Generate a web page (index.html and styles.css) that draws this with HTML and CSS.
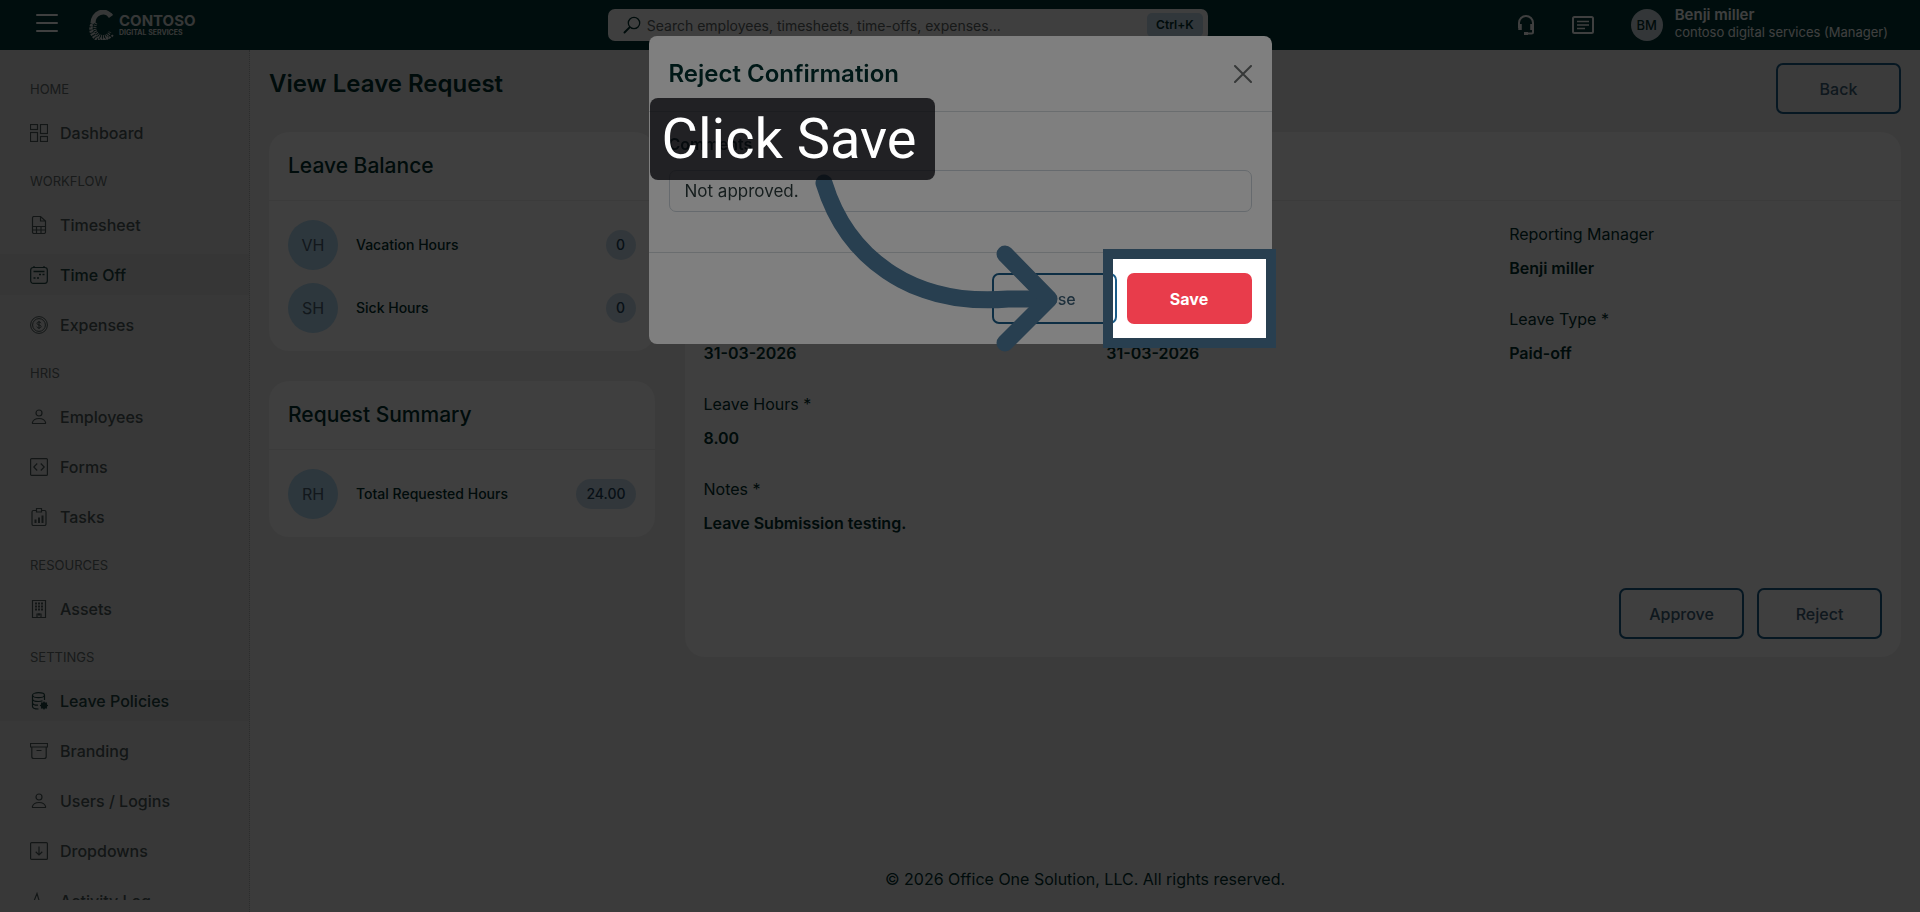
FILE: index.html
```html
<!DOCTYPE html>
<html lang="en">
<head>
    <meta charset="UTF-8">
    <meta name="viewport" content="width=device-width, initial-scale=1.0">
    <title>View Leave Request</title>
    <link rel="stylesheet" href="styles.css">
</head>
<body>
    <header class="topbar">
        <button class="icon-btn menu-btn" aria-label="Menu">
            <svg width="22" height="20" viewBox="0 0 22 20" fill="none" stroke="currentColor" stroke-width="2" stroke-linecap="round"><path d="M1 2h20M1 10h20M1 18h20"/></svg>
        </button>
        <a class="logo" href="#">
            <svg width="28" height="30" viewBox="0 0 28 30" fill="none" stroke="currentColor">
                <path d="M25 5A12.500 13.500 0 1 0 26 25" stroke-width="2" stroke-dasharray="2 1"/>
                <path d="M24 6.500A10 11 0 0 0 6 13" stroke-width="5"/>
                <path d="M6 12A10 11 0 0 0 22 26" stroke-width="3" stroke-dasharray="2 1"/>
                <path d="M9 13A8 9 0 0 0 23 22" stroke-width="3" stroke-dasharray="1 1"/>
            </svg>
            <span class="logo-text">
                <span class="logo-name">CONTOSO</span>
                <span class="logo-sub">DIGITAL SERVICES</span>
            </span>
        </a>
        <div class="search">
            <svg width="18" height="18" viewBox="0 0 18 18" fill="none" stroke="currentColor" stroke-linecap="round"><circle cx="11" cy="7" r="5.7" stroke-width="1.3"/><path d="M6.6 11.4L1.5 16.5" stroke-width="2"/></svg>
            <input type="text" aria-label="Search" placeholder="Search employees, timesheets, time-offs, expenses...">
            <kbd>Ctrl+K</kbd>
        </div>
        <div class="topbar-right">
            <button class="icon-btn" aria-label="Support">
                <svg width="18" height="20" viewBox="0 0 18 20" fill="none" stroke="currentColor" stroke-width="2"><path d="M2 13V8a7 7 0 0 1 14 0v9a1.500 1.500 0 0 1-1.500 1.500H8"/><path d="M3 9v6M15 9v6" stroke-width="3.500"/><path d="M7 18.500h4" stroke-width="3"/></svg>
            </button>
            <button class="icon-btn" aria-label="Messages">
                <svg width="22" height="18" viewBox="0 0 22 18" fill="none" stroke="currentColor" stroke-width="2"><rect x="1" y="1" width="20" height="16" rx="1.500"/><path d="M5 5.500h12M5 9h12M5 12.500h8" stroke-width="1.600"/></svg>
            </button>
            <div class="user">
                <span class="user-avatar">BM</span>
                <div>
                    <div class="user-name">Benji miller</div>
                    <div class="user-role">contoso digital services (Manager)</div>
                </div>
            </div>
        </div>
    </header>

    <div class="layout">
        <aside class="sidebar">
            <nav class="nav">
                <h6>HOME</h6>
                <a href="#"><svg class="ico" viewBox="0 0 18 18"><rect x=".5" y=".5" width="7" height="5"/><rect x="10.500" y=".5" width="7" height="9"/><rect x=".5" y="8.500" width="7" height="9"/><rect x="10.500" y="12.500" width="7" height="5"/></svg>Dashboard</a>

                <h6>WORKFLOW</h6>
                <a href="#"><svg class="ico" viewBox="0 0 18 18"><path d="M4 .5h6.500L15.500 5v11a1.500 1.500 0 0 1-1.500 1.500H4A1.500 1.500 0 0 1 2.500 16V2A1.500 1.500 0 0 1 4 .5zM10.500 .5V5h5M2.500 10.500h13M2.500 14h13M6.500 10.500v7M11 10.500v7"/></svg>Timesheet</a>
                <a href="#" class="active"><svg class="ico" viewBox="0 0 18 18"><rect x=".7" y="1.500" width="16.600" height="15.800" rx="2.500"/><path d="M4 0v2M14 0v2"/><path d="M3.500 5.500h11M9 8.500h2M12.500 8.500h2M3.500 12h2M7 12h2" stroke-width="1.600"/></svg>Time Off</a>
                <a href="#"><svg class="ico thin" viewBox="0 0 18 18"><circle cx="9" cy="9" r="8.400"/><circle cx="9" cy="9" r="6.400"/><path d="M11 7.200C10.800 6.400 10 6 9 6 7.900 6 7 6.500 7 7.400c0 2.100 4.100 1.100 4.100 3.100 0 1-.9 1.500-2.100 1.500-1.100 0-2-.5-2.200-1.400M9 5v8"/></svg>Expenses</a>

                <h6>HRIS</h6>
                <a href="#"><svg class="ico" viewBox="0 0 18 18"><circle cx="9" cy="5" r="3"/><path d="M3 15.500c-.5 0-.7-.3-.6-.8C3 12 5.600 10.500 9 10.500s6 1.500 6.600 4.200c.1.500-.1.800-.6.800z"/></svg>Employees</a>
                <a href="#"><svg class="ico" viewBox="0 0 18 18"><rect x=".6" y=".6" width="16.800" height="16.800" rx="1"/><path d="M7.200 5.500L3.800 9l3.400 3.500M10.800 5.500L14.200 9l-3.400 3.500"/></svg>Forms</a>
                <a href="#"><svg class="ico" viewBox="0 0 18 18"><path d="M6 2.500H3.500A1.500 1.500 0 0 0 2 4v12a1.500 1.500 0 0 0 1.500 1.500h11A1.500 1.500 0 0 0 16 16V4a1.500 1.500 0 0 0-1.500-1.500H12M6.500 .5h5v3.500h-5z"/><path d="M5.500 11.500V15M9 9.500V15M12.500 7.500V15" stroke-width="2"/></svg>Tasks</a>

                <h6>RESOURCES</h6>
                <a href="#"><svg class="ico" viewBox="0 0 18 18"><path d="M2.500 .5h13v17h-13zM7 17.500V14h4v3.500"/><path d="M5 3.500h2M8 3.500h2M11 3.500h2M5 6.500h2M8 6.500h2M11 6.500h2M5 9.500h2M8 9.500h2M11 9.500h2M8 14.500h2" stroke-width="1.800"/></svg>Assets</a>

                <h6>SETTINGS</h6>
                <a href="#" class="active"><svg class="ico" viewBox="0 0 18 18"><ellipse cx="8.500" cy="3.200" rx="6" ry="2.500"/><path d="M2.500 3.200V14.500c0 1.300 2.500 2.500 6 2.500M14.500 3.200V8M2.500 7c0 1.400 2.700 2.500 6 2.500 1.500 0 3-.2 4-.7M2.500 10.700c0 1.400 2.500 2.500 5.500 2.500"/><circle cx="14" cy="13.500" r="2.700" fill="currentColor"/><path d="M14 9.500v8M10 13.500h8M11.200 10.700l5.600 5.600M16.800 10.700l-5.600 5.600"/></svg>Leave Policies</a>
                <a href="#"><svg class="ico" viewBox="0 0 18 18"><path d="M.5 1.500h17v3.500H.5zM1.800 5v9.500a2 2 0 0 0 2 2h10.400a2 2 0 0 0 2-2V5M6.500 8.500h5"/></svg>Branding</a>
                <a href="#"><svg class="ico" viewBox="0 0 18 18"><circle cx="9" cy="5" r="3"/><path d="M3 15.500c-.5 0-.7-.3-.6-.8C3 12 5.600 10.500 9 10.500s6 1.500 6.600 4.200c.1.500-.1.800-.6.800z"/></svg>Users / Logins</a>
                <a href="#"><svg class="ico" viewBox="0 0 18 18"><rect x=".6" y=".6" width="16.800" height="16.800" rx="1"/><path d="M9 4.500v8.500M5.700 9.800L9 13l3.300-3.200"/></svg>Dropdowns</a>
                <a href="#"><svg class="ico" viewBox="0 0 18 18"><path d="M0 9h4l3-7.500L11 15l2.500-6H18"/></svg>Activity Log</a>
            </nav>
        </aside>

        <main class="content">
            <div class="page-head">
                <h1>View Leave Request</h1>
                <button class="btn btn-outline">Back</button>
            </div>

            <div class="grid">
                <div class="col-side">
                    <section class="card">
                        <h2>Leave Balance</h2>
                        <div class="card-body">
                            <div class="balance"><span class="circle">VH</span><span class="balance-name">Vacation Hours</span><span class="pill">0</span></div>
                            <div class="balance"><span class="circle">SH</span><span class="balance-name">Sick Hours</span><span class="pill">0</span></div>
                        </div>
                    </section>
                    <section class="card">
                        <h2>Request Summary</h2>
                        <div class="card-body">
                            <div class="balance"><span class="circle">RH</span><span class="balance-name">Total Requested Hours</span><span class="pill">24.00</span></div>
                        </div>
                    </section>
                </div>

                <section class="card col-main">
                    <div class="card-head"></div>
                    <div class="card-body">
                        <div class="fields">
                            <div class="field last-col">
                                <div class="field-label">Reporting Manager</div>
                                <div class="field-value">Benji miller</div>
                            </div>
                            <div class="field">
                                <div class="field-value">31-03-2026</div>
                            </div>
                            <div class="field">
                                <div class="field-value">31-03-2026</div>
                            </div>
                            <div class="field">
                                <div class="field-label">Leave Type *</div>
                                <div class="field-value">Paid-off</div>
                            </div>
                            <div class="field full">
                                <div class="field-label">Leave Hours *</div>
                                <div class="field-value">8.00</div>
                            </div>
                            <div class="field full">
                                <div class="field-label">Notes *</div>
                                <div class="field-value">Leave Submission testing.</div>
                            </div>
                        </div>
                        <div class="actions">
                            <button class="btn btn-outline">Approve</button>
                            <button class="btn btn-outline">Reject</button>
                        </div>
                    </div>
                </section>
            </div>

            <footer class="footer">© 2026 Office One Solution, LLC. All rights reserved.</footer>
        </main>
    </div>

    <div class="backdrop">
        <div class="modal" role="dialog" aria-labelledby="modal-title">
            <div class="modal-header">
                <h2 id="modal-title">Reject Confirmation</h2>
                <button class="icon-btn" aria-label="Dismiss">
                    <svg width="18" height="18" viewBox="0 0 18 18" fill="none" stroke="currentColor" stroke-width="2" stroke-linecap="round"><path d="M1 1l16 16M17 1L1 17"/></svg>
                </button>
            </div>
            <div class="modal-body">
                <label for="comments">Comments</label>
                <input id="comments" type="text" value="Not approved.">
            </div>
            <div class="modal-footer">
                <button class="btn btn-outline">Close</button>
                <div class="spot">
                    <button class="btn btn-danger">Save</button>
                    <div class="spot-frame"></div>
                </div>
            </div>

            <!-- guide step -->
            <svg class="arrow" width="270" height="190" viewBox="0 0 270 190" fill="none" stroke="currentColor" stroke-width="17" stroke-linecap="round" stroke-linejoin="round">
                <path d="M20 20C42 92 105 144 204 136H244"/>
                <path d="M201 91L245 136L201 180"/>
            </svg>
            <div class="callout">Click Save</div>
        </div>
    </div>
</body>
</html>
```

FILE: styles.css
```css
* {
    box-sizing: border-box;
}
body {
    margin: 0;
    height: 100vh;
    overflow: hidden;
    display: flex;
    flex-direction: column;
    font-family: Inter, "Liberation Sans", sans-serif;
    font-size: 16px;
    line-height: 24px;
    color: #00302e;
    background: #eeeeee;
}
h1, h2, h6 {
    margin: 0;
    font-weight: 500;
}
button, input, kbd {
    font-family: inherit;
}

/* top bar */
.topbar {
    height: 50px;
    flex-shrink: 0;
    display: flex;
    align-items: center;
    padding: 0 32px 0 36px;
    background: #003634;
    color: #ffffff;
}
.icon-btn {
    display: flex;
    padding: 0;
    border: 0;
    background: none;
    color: inherit;
    cursor: pointer;
}
.menu-btn {
    margin-bottom: 4px;
}
.logo {
    display: flex;
    align-items: center;
    gap: 4px;
    margin: 0 auto 0 29px;
    color: #d8dcdc;
    text-decoration: none;
}
.logo-text {
    display: flex;
    flex-direction: column;
}
.logo-name {
    font-size: 15px;
    line-height: 15px;
    font-weight: 700;
}
.logo-sub {
    font-size: 7px;
    line-height: 9px;
    font-weight: 700;
}
.search {
    width: 600px;
    height: 32px;
    margin-right: 309px;
    display: flex;
    align-items: center;
    gap: 6px;
    padding: 0 5px 0 15px;
    background: #ffffff;
    border-radius: 7px;
    color: #00302e;
}
.search input {
    flex: 1;
    min-width: 0;
    padding: 0;
    border: 0;
    background: none;
    font-size: 14px;
}
.search input::placeholder {
    color: #5c6464;
}
.search kbd {
    padding: 0 9px;
    border-radius: 5px;
    background: #c6dcec;
    font-size: 12px;
    font-weight: 600;
}
.topbar-right {
    display: flex;
    align-items: center;
    gap: 37px;
}
.user {
    display: flex;
    align-items: center;
    gap: 12px;
}
.user-avatar {
    width: 32px;
    height: 32px;
    border-radius: 50%;
    background: #ccd8e0;
    color: #00302e;
    font-size: 13px;
    font-weight: 500;
    line-height: 32px;
    text-align: center;
}
.user-name {
    font-size: 15px;
    font-weight: 600;
    line-height: 16px;
}
.user-role {
    font-size: 13px;
    line-height: 18px;
    margin-bottom: 2px;
}

/* side bar */
.layout {
    flex: 1;
    min-height: 0;
    display: flex;
}
.sidebar {
    width: 250px;
    flex-shrink: 0;
    padding: 20px 0 12px;
    background: #e2e2e2;
    border-right: 1px dotted #b0b4b4;
}
.nav {
    height: 100%;
    overflow: hidden;
}
.nav h6 {
    padding: 1px 0 5px 30px;
    font-size: 13px;
    font-weight: 400;
    line-height: 36px;
    color: #646c6c;
}
.nav a {
    display: flex;
    align-items: center;
    gap: 12px;
    height: 41px;
    margin-bottom: 9px;
    padding-left: 30px;
    color: #4c5a5a;
    font-weight: 500;
    text-decoration: none;
}
.nav a.active {
    background: #d8dada;
    color: #204442;
}
.ico {
    width: 18px;
    height: 18px;
    fill: none;
    stroke: currentColor;
    stroke-width: 1.2;
}
.thin {
    stroke-width: 1;
}

/* page */
.content {
    flex: 1;
    display: flex;
    flex-direction: column;
    padding: 13px 19px 21px;
}
.page-head {
    display: flex;
    justify-content: space-between;
    margin-bottom: 18px;
}
.page-head h1 {
    font-size: 24px;
    font-weight: 600;
    line-height: 42px;
}
.btn {
    width: 125px;
    height: 51px;
    border-radius: 7px;
    font-size: 16px;
    font-weight: 500;
    cursor: pointer;
}
.btn-outline {
    border: 2px solid #1a5c88;
    background: none;
    color: #3c6078;
}
.btn-danger {
    border: 0;
    background: #e83c4b;
    color: #ffffff;
    font-weight: 700;
}
.grid {
    display: grid;
    grid-template-columns: repeat(12, 1fr);
    gap: 30px;
    align-items: start;
}
.col-side {
    grid-column: span 3;
    display: flex;
    flex-direction: column;
    gap: 30px;
}
.col-main {
    grid-column: span 9;
}
.card {
    background: #fcfcfc;
    border-radius: 20px;
}
.card h2, .card-head {
    height: 69px;
    padding: 0 19px;
    border-bottom: 1px solid #ececec;
    font-size: 21px;
    line-height: 68px;
}
.card-body {
    display: flex;
    flex-direction: column;
    gap: 13px;
    padding: 19px 19px 18px;
}
.col-main .card-body {
    padding-top: 21px;
}
.balance {
    display: flex;
    align-items: center;
}
.circle {
    width: 50px;
    height: 50px;
    border-radius: 50%;
    background: #b4dcf4;
    color: #4a6070;
    line-height: 50px;
    text-align: center;
}
.balance-name {
    flex: 1;
    margin-left: 18px;
    font-size: 14px;
    font-weight: 500;
}
.pill {
    min-width: 30px;
    padding: 0 10px;
    border-radius: 15px;
    background: #c8dfee;
    color: #204058;
    font-size: 14px;
    font-weight: 500;
    line-height: 30px;
    text-align: center;
}
.fields {
    display: grid;
    grid-template-columns: repeat(3, 1fr);
    gap: 27px 30px;
}
.field {
    display: flex;
    flex-direction: column;
    justify-content: flex-end;
    gap: 10px;
}
.last-col {
    grid-column: 3;
}
.full {
    grid-column: 1 / -1;
}
.field-value {
    font-weight: 600;
}
.actions {
    display: flex;
    justify-content: flex-end;
    gap: 13px;
    margin-top: 40px;
}
.footer {
    margin-top: auto;
    text-align: center;
}

/* modal */
.backdrop {
    position: fixed;
    inset: 0;
    padding-top: 36px;
    background: rgba(0, 0, 0, 0.5);
}
.modal {
    position: relative;
    width: 623px;
    max-width: 100%;
    margin: 0 auto;
    background: #ffffff;
    border-radius: 8px;
}
.modal-header {
    display: flex;
    align-items: center;
    justify-content: space-between;
    height: 76px;
    padding: 0 20px;
    border-bottom: 1px solid #d4dade;
    color: #6c7070;
}
.modal-header h2 {
    font-size: 24px;
    font-weight: 600;
    color: #00302e;
}
.modal-body {
    padding: 20px 20px 40px;
}
.modal-body label {
    display: block;
    margin-bottom: 14px;
    font-weight: 600;
}
.modal-body input {
    display: block;
    width: 100%;
    height: 42px;
    padding: 0 15px;
    border: 1px solid #cdd5dc;
    border-radius: 7px;
    background: none;
    font-size: 17px;
    color: #2c3c3c;
}
.modal-footer {
    display: flex;
    justify-content: flex-end;
    gap: 10px;
    padding: 20px;
    border-top: 1px solid #d4dade;
}

/* guide overlay */
.spot {
    position: relative;
}
.spot-frame {
    position: absolute;
    inset: -24px;
    border: 10px solid #283f50;
    box-shadow: 0 0 0 3000px rgba(0, 0, 0, 0.5);
    pointer-events: none;
}
.arrow {
    position: absolute;
    left: 155px;
    top: 127px;
    color: #283f50;
}
.callout {
    position: absolute;
    left: 1px;
    top: 62px;
    padding: 0 18px 0 12px;
    border-radius: 8px;
    background: rgba(6, 7, 10, 0.78);
    color: #ffffff;
    font-family: Roboto, sans-serif;
    font-size: 56px;
    line-height: 82px;
    white-space: nowrap;
}
```
